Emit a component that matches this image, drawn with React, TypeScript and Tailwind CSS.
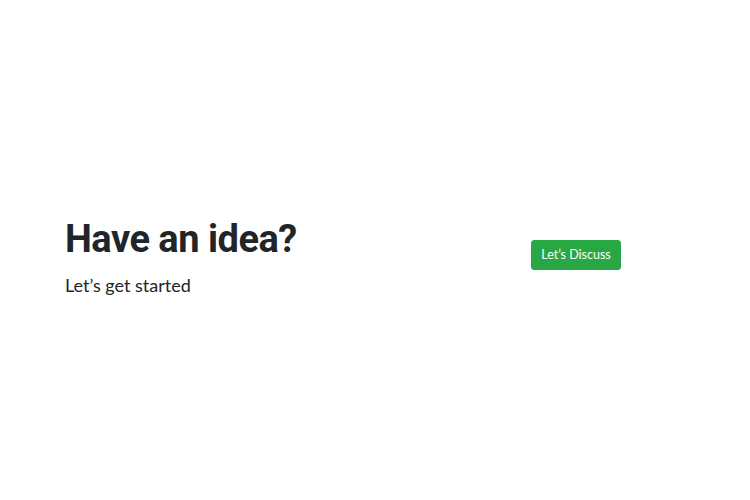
export default function App() {
  return (
    <div className="w-[750px] h-[500px] bg-white flex items-center">
      <div className="flex items-center w-full pl-[65px] pt-[14px]">
        <div className="w-[466px] flex flex-col">
          <h1 className="text-[38px] leading-[46px] font-bold tracking-[-0.5px] text-[#212529] m-0" style={{ fontFamily: "Roboto, sans-serif" }}>
            Have an idea?
          </h1>
          <p className="text-[18px] leading-[28px] text-[#212529] mt-[9px]" style={{ fontFamily: "Lato, sans-serif" }}>
            Let’s get started
          </p>
        </div>
        <button className="h-[30px] w-[90px] mb-[4px] rounded-[3px] bg-[#28a745] border border-[#28a745] text-white text-[12.5px] leading-none" style={{ fontFamily: "Lato, sans-serif" }}>
          Let’s Discuss
        </button>
      </div>
    </div>
  );
}
